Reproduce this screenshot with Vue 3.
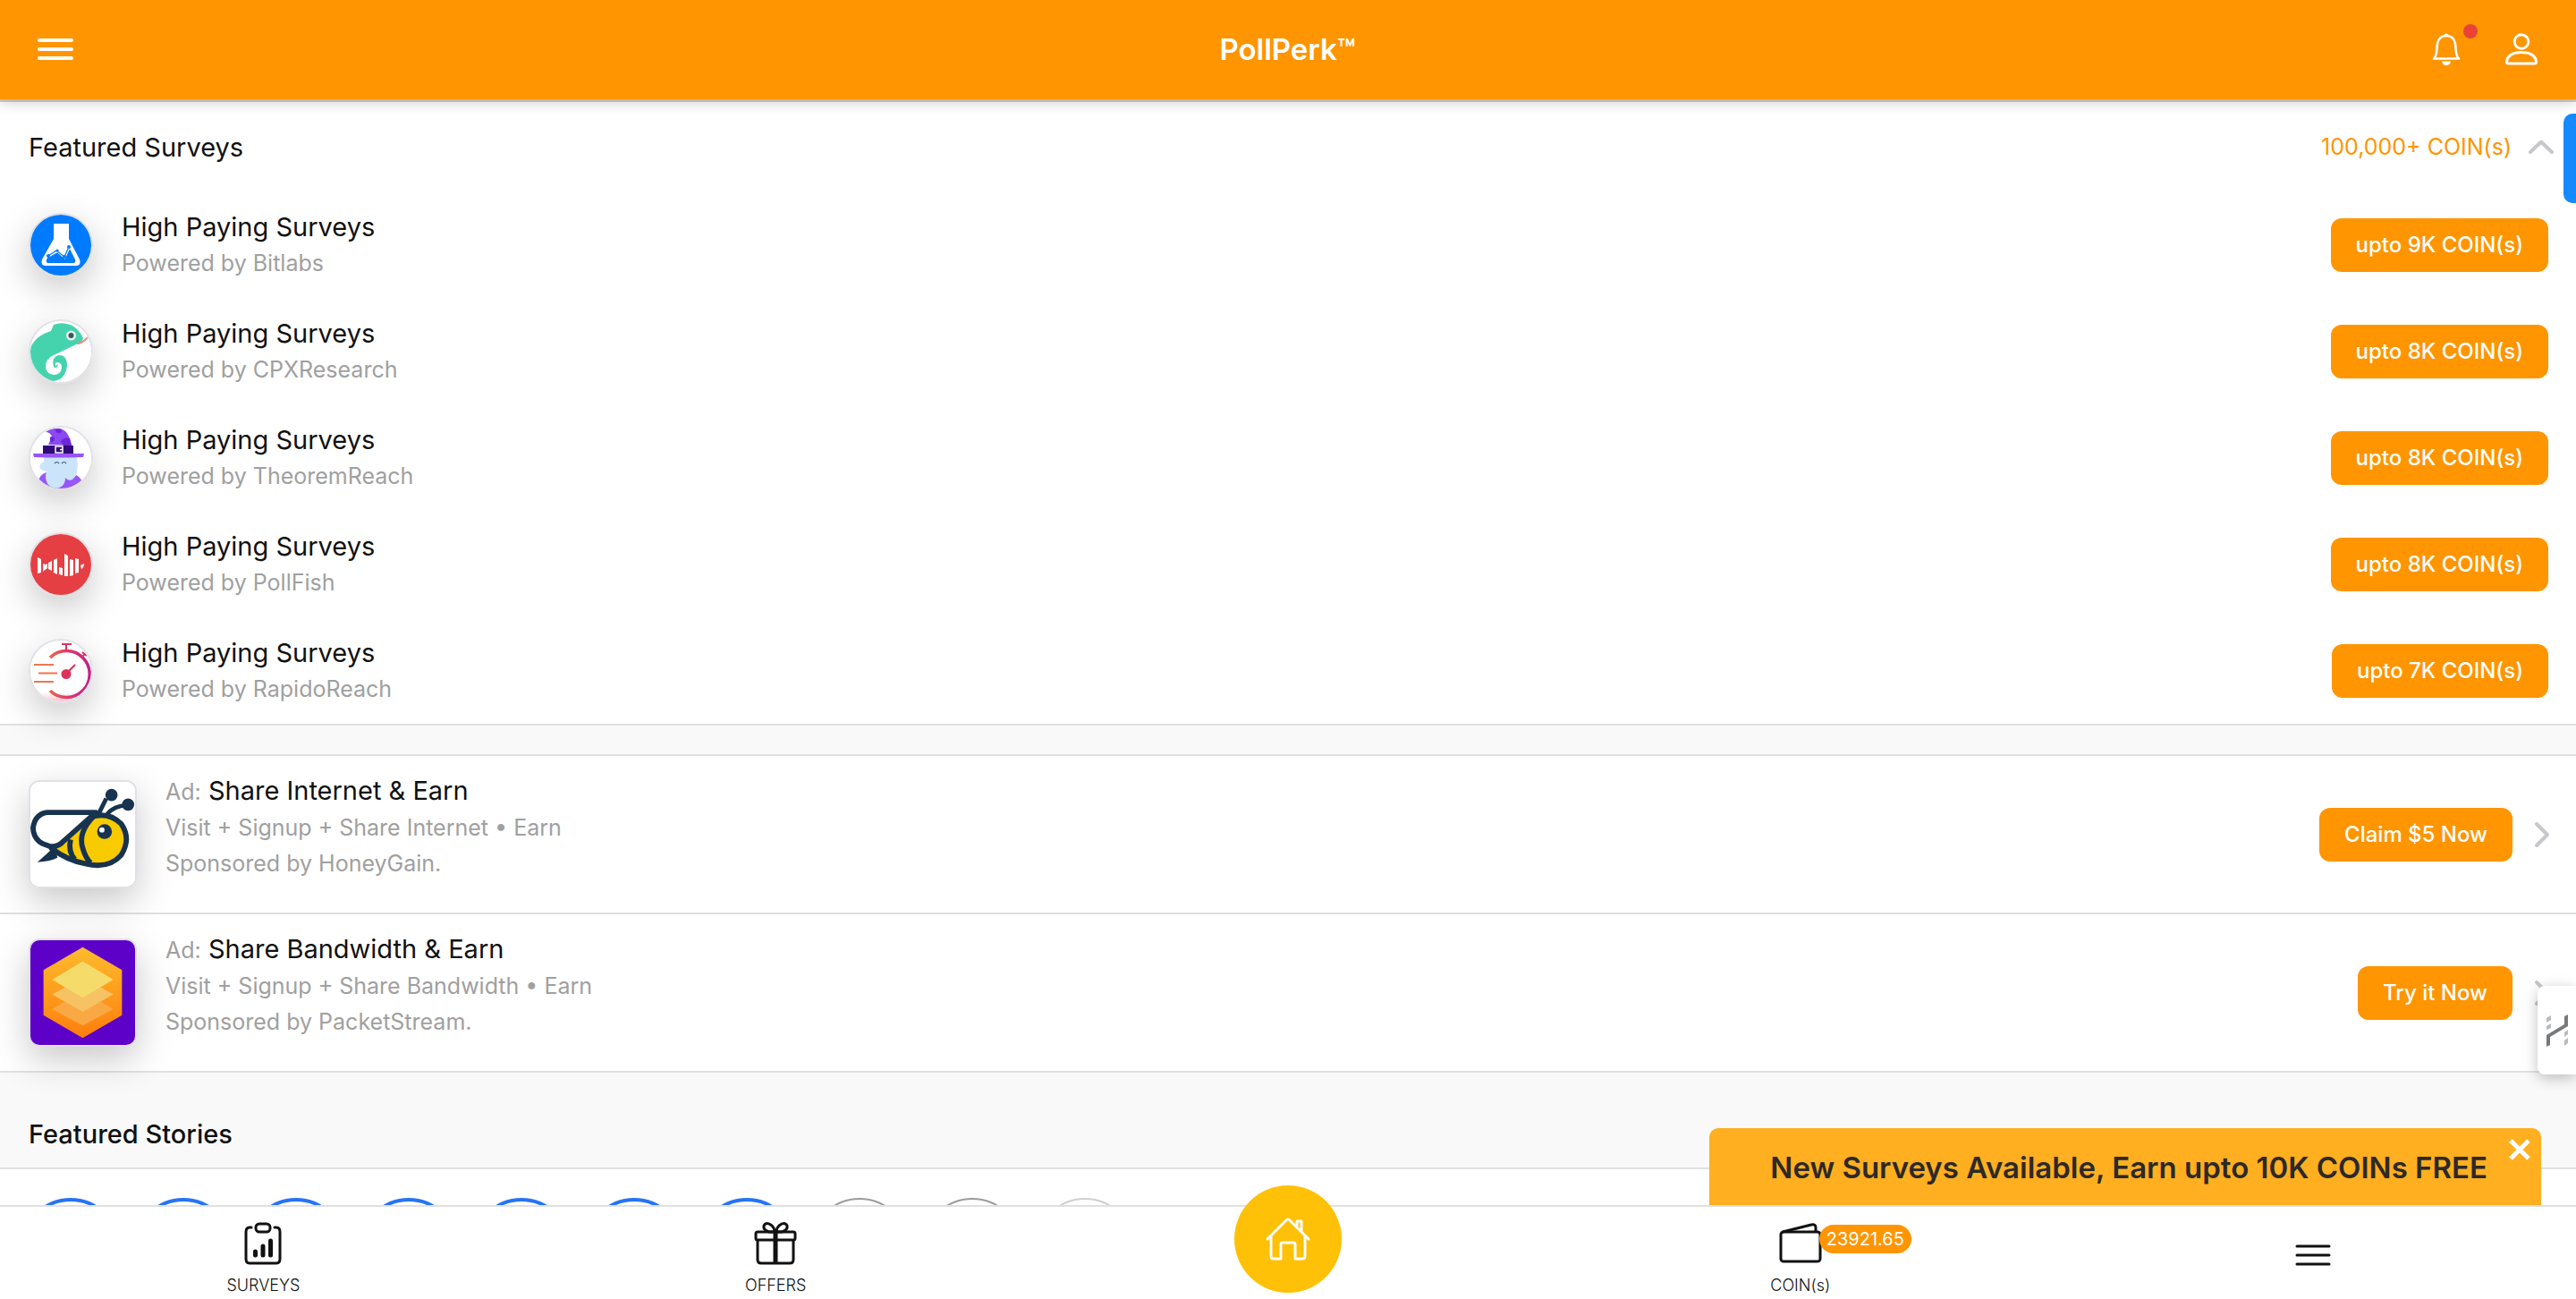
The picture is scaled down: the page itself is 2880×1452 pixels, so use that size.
<script setup>
const surveys = [
  { id: 'bitlabs', by: 'Bitlabs', reward: '9K' },
  { id: 'cpx', by: 'CPXResearch', reward: '8K' },
  { id: 'theorem', by: 'TheoremReach', reward: '8K' },
  { id: 'pollfish', by: 'PollFish', reward: '8K' },
  { id: 'rapido', by: 'RapidoReach', reward: '7K' },
]
const ads = [
  { id: 'honey', title: 'Share Internet & Earn', steps: 'Visit + Signup + Share Internet • Earn', by: 'HoneyGain', action: 'Claim $5 Now' },
  { id: 'packet', title: 'Share Bandwidth & Earn', steps: 'Visit + Signup + Share Bandwidth • Earn', by: 'PacketStream', action: 'Try it Now' },
]
const stories = ['new', 'new', 'new', 'new', 'new', 'new', 'new', 'seen', 'seen', 'old']
</script>

<template>
  <div class="app">
    <header class="navbar">
      <button class="icon-btn" aria-label="Menu">
        <svg width="40" height="24" viewBox="0 0 40 24" fill="none" stroke="#fff" stroke-width="4" stroke-linecap="round"><path d="M2 2H38M2 12H38M2 22H38" /></svg>
      </button>
      <h1>PollPerk™</h1>
      <div class="nav-actions">
        <button class="icon-btn bell" aria-label="Notifications">
          <svg width="32" height="36" viewBox="0 0 32 36"><path d="M2 28.500C6 26 5 18 6 12C7 6 11 3 16 3S25 6 26 12C27 18 26 26 30 28.500Z" fill="none" stroke="#fff" stroke-width="2.600" stroke-linejoin="round" /><path d="M13 2.500Q16-1.500 19 2.500ZM11 31.500H21Q20 36 16 36T11 31.500Z" fill="#fff" /></svg>
          <i class="dot"></i>
        </button>
        <button class="icon-btn" aria-label="Profile">
          <svg width="36" height="36" viewBox="0 0 36 36" fill="none" stroke="#fff" stroke-width="3"><circle cx="18" cy="9.500" r="7.800" /><path d="M1.500 32C2 25 9 21.500 18 21.500S34 25 34.500 32Q34.500 34 32.500 34H3.500Q1.500 34 1.500 32Z" /></svg>
        </button>
      </div>
    </header>

    <main class="content">
      <section class="block surveys">
        <button class="accordion">
          <span class="accordion-title">Featured Surveys</span>
          <span class="coins">100,000+ COIN(s)</span>
          <svg width="30" height="18" viewBox="0 0 30 18" fill="none" stroke="#c7c7cc" stroke-width="4" stroke-linecap="round" stroke-linejoin="round"><path d="M3 15L15 3.500L27 15" /></svg>
        </button>
        <ul>
          <li v-for="s in surveys" :key="s.id" class="survey">
            <span class="avatar">
              <svg v-if="s.id === 'bitlabs'" viewBox="0 0 68 68"><rect width="68" height="68" fill="#007bff" /><path d="M26 10H43V27L55 50Q57 57 51 57H17Q11 57 13 50L26 27Z" fill="#fff" /><path d="M18 50L20 47L30 42L38 48L44 38L50 50Q51 54 48 54H20Q17 54 18 50Z" fill="#007bff" /><path d="M20 46L30 40L38 47L43 36" fill="none" stroke="#fff" stroke-width="3.500" /><path d="M20 46L29 40L38 47L43 36" fill="none" stroke="#007bff" stroke-width="1.300" /><g fill="#007bff"><circle cx="20" cy="46" r="2" /><circle cx="30" cy="40" r="1.600" /><circle cx="38" cy="47" r="2" /><circle cx="43" cy="36" r="2" /></g></svg>
              <svg v-else-if="s.id === 'cpx'" viewBox="0 0 68 68"><rect width="68" height="68" fill="#fff" /><path d="M-2 38C0 24 8 16 23 11L26 4Q36 0 47 5Q55 10 59 19Q58 24 51 26L26 38Q17 42 17 50Q17 59 26 60Q34 60 35 52Q35 46 30 46Q27 46 28 50L31 48Q30 54 26 51Q23 40 32 38Q41 38 41 50Q39 66 25 67Q9 68 -2 50Z" fill="#45d3ae" /><path d="M52 25Q58 25 64 18" fill="none" stroke="#f08b82" stroke-width="2" /><circle cx="45.500" cy="16" r="5.500" fill="#e5f2f0" /><circle cx="45.500" cy="16" r="3" fill="#44545b" /></svg>
              <svg v-else-if="s.id === 'theorem'" viewBox="0 0 68 68"><rect width="68" height="68" fill="#fff" /><path d="M18 50Q9 53 9 61L18 68H51L58 60Q54 52 44 51Z" fill="#9855f8" /><path d="M15 31H51Q54 41 52 47Q53 53 47 58Q42 60 39 56Q39 67 28 68Q17 66 17 54L18 49Q8 47 11 41Q13 39 15 38Z" fill="#cbe4fa" /><path d="M20 19L24 10Q22 5 17 5Q24 0 33 1Q43 3 46 20Z" fill="#8b49f1" /><path d="M28 2Q36 0 35 5Q31 8 28 4ZM44 12Q36 10 34 16L37 20H46ZM23 10Q29 10 26 15Q21 18 22 11Z" fill="#6d27d5" /><rect x="14" y="20" width="34" height="9" fill="#310a78" /><path d="M3 29H60L59 33Q31 34 4 33Z" fill="#9855f8" /><path d="M28 21H36V28H28ZM36 24.500H33" fill="none" stroke="#fff" stroke-width="1.500" /><path d="M27 40Q29.500 37 32 40M35 40Q37.500 37 40 40" fill="none" stroke="#3f5270" stroke-width="1.200" /></svg>
              <svg v-else-if="s.id === 'pollfish'" viewBox="0 0 68 68"><rect width="68" height="68" fill="#e53f43" /><path d="M8 26L12 28V43L8 44ZM14 33L17 34L19 33V38L14 42ZM20 32L24 30V41L20 39ZM26 29L30 27V45L26 43ZM32 37L36 38V46L32 45ZM38 22L42 24V47H38ZM44 28L48 29V46L44 47ZM50 27L54 28V43L50 44ZM56 35L60 33Q60 37 57 39Z" fill="#fff" /></svg>
              <svg v-else viewBox="0 0 68 68"><defs><linearGradient id="rapido-ring" x1="0" x2="1"><stop stop-color="#ee604d" /><stop offset=".7" stop-color="#d3297c" /><stop offset="1" stop-color="#bf218b" /></linearGradient><linearGradient id="rapido-glow" x1="0" y1="0" x2="0" y2="1"><stop stop-color="#fff" /><stop offset="1" stop-color="#ffc4ce" /></linearGradient></defs><rect width="68" height="68" fill="#fff" /><rect x="8" y="58" width="44" height="10" fill="url(#rapido-glow)" /><path d="M22 19A26 26 0 1 1 22 56" fill="none" stroke="url(#rapido-ring)" stroke-width="3.500" /><path d="M40 12V5M35 4H46M40 37L50 27M57 19L61 15M58 13L63 17" fill="none" stroke="#d93364" stroke-width="2.200" /><circle cx="40" cy="37.500" r="5.500" fill="#dc3458" /><path d="M4 27H26M9 36.500H30M4 46H26" stroke="#f0744e" stroke-width="2.200" /></svg>
            </span>
            <div class="copy">
              <div class="title">High Paying Surveys</div>
              <div class="sub">Powered by {{ s.by }}</div>
            </div>
            <button class="btn">upto {{ s.reward }} COIN(s)</button>
          </li>
        </ul>
      </section>

      <section class="block ads">
        <article v-for="a in ads" :key="a.id" class="ad">
          <span class="thumb">
            <svg v-if="a.id === 'honey'" viewBox="0 0 120 120"><rect width="120" height="120" fill="#fff" /><path d="M28 74L8 92Q24 91 31 87Z" fill="#17334f" /><path d="M24 76Q32 60 70 40Q90 34 104 48Q116 65 104 84Q90 100 64 94Q42 90 24 76Z" fill="#f8ca00" stroke="#17334f" stroke-width="6" stroke-linejoin="round" /><path d="M19 35H75L39 67Q30 77 20 73Q4 69 3 53Q5 37 19 35Z" fill="#fff" stroke="#17334f" stroke-width="6" stroke-linejoin="round" /><path d="M46 66Q43 80 51 89M73 39Q54 58 60 76Q63 87 69 93" fill="none" stroke="#17334f" stroke-width="6" /><path d="M78 37L87 19M88 37Q96 27 110 27" fill="none" stroke="#17334f" stroke-width="5" /><g fill="#17334f"><circle cx="93" cy="15" r="7" /><circle cx="112" cy="26" r="7" /><circle cx="85" cy="57" r="8.500" /></g><circle cx="82" cy="55" r="3" fill="#fff" /></svg>
            <svg v-else viewBox="0 0 120 120"><defs><linearGradient id="packet-hex" x1="0" y1="0" x2="0" y2="1"><stop stop-color="#fdbb2d" /><stop offset="1" stop-color="#ff7e0c" /></linearGradient></defs><rect width="120" height="120" fill="#5d00c8" /><path d="M60 8L105 34V86L60 112L15 86V34Z" fill="url(#packet-hex)" /><path d="M60 58L95 79L60 98L25 79Z" fill="#f9a843" /><path d="M60 42L95 62L60 82L25 62Z" fill="#f7c263" /><path d="M60 24L95 45L60 66L25 45Z" fill="#f5dc6a" /></svg>
          </span>
          <div class="copy">
            <div class="title"><span class="tag">Ad:</span> {{ a.title }}</div>
            <div class="sub">{{ a.steps }}</div>
            <div class="sub">Sponsored by {{ a.by }}.</div>
          </div>
          <button class="btn">{{ a.action }}</button>
          <svg class="chevron" width="18" height="30" viewBox="0 0 18 30" fill="none" stroke="#c7c7cc" stroke-width="4" stroke-linecap="round" stroke-linejoin="round"><path d="M3 3L15 15L3 27" /></svg>
        </article>
      </section>

      <h2>Featured Stories</h2>
      <section class="stories">
        <a v-for="(s, i) in stories" :key="i" href="#" class="story" :class="s" aria-label="Story"></a>
      </section>

      <aside class="banner">
        <span>New Surveys Available, Earn upto 10K COINs FREE</span>
        <button class="close" aria-label="Close"><svg width="26" height="26" viewBox="0 0 26 26" stroke="#fff" stroke-width="5"><path d="M3 3L23 23M23 3L3 23" /></svg></button>
      </aside>
      <div class="side-tab"></div>
      <button class="widget" aria-label="Widget">
        <svg width="24" height="36" viewBox="0 0 24 36"><path d="M0 23L20 11V2L24 0V13L4 25V34L0 36Z" fill="#77787b" /><path d="M0 4L5 1V6L0 9ZM0 13L5 10V15L0 17ZM20 20L24 17V22L20 25ZM20 29L24 26V32L20 35Z" fill="#b9babc" /></svg>
      </button>
    </main>

    <nav class="tabbar">
      <a href="#" class="tab">
        <svg width="48" height="48" viewBox="0 0 48 48" fill="none" stroke="#111" stroke-width="3" stroke-linecap="round"><path d="M11 6H9Q5 6 5 11V41Q5 46 9 46H39Q43 46 43 41V11Q43 6 39 6H37" /><rect x="16" y="2" width="16" height="9" rx="4" /><path d="M15.500 33V37M24 27V37M32.500 21V37" stroke-width="5" /></svg>
        <span>SURVEYS</span>
      </a>
      <a href="#" class="tab">
        <svg width="48" height="48" viewBox="0 0 48 48" fill="none" stroke="#111" stroke-width="3"><rect x="2" y="11" width="44" height="9" rx="2" /><path d="M4 20V42Q4 46 8 46H40Q44 46 44 42V20M23 11H17Q10 9 11 4Q14-1 20 4Q23 7 23 11M25 11H31Q38 9 37 4Q34-1 28 4Q25 7 25 11" /><path d="M24 11V46" stroke-width="5" /></svg>
        <span>OFFERS</span>
      </a>
      <div class="tab">
        <button class="fab" aria-label="Home">
          <svg width="50" height="48" viewBox="0 0 50 48" fill="none" stroke="#fff" stroke-width="3" stroke-linecap="round" stroke-linejoin="round"><path d="M2 24L23 3Q25 1 27 3L48 24M6 21V43Q6 46 9 46H17V30Q17 28 19 28H31Q33 28 33 30V46H41Q44 46 44 43V21M35 10V4H40V15" /></svg>
        </button>
      </div>
      <a href="#" class="tab">
        <span class="wallet">
          <svg width="48" height="48" viewBox="0 0 48 48" fill="none" stroke="#111" stroke-width="3"><rect x="2" y="11" width="44" height="33" rx="3" /><path d="M4 11L36 3Q41 2 41 6V11" /></svg>
          <b class="badge">23921.65</b>
        </span>
        <span>COIN(s)</span>
      </a>
      <button class="tab" aria-label="More">
        <svg width="40" height="24" viewBox="0 0 40 24" fill="none" stroke="#111" stroke-width="3" stroke-linecap="round"><path d="M2 2H38M2 12H38M2 22H38" /></svg>
      </button>
    </nav>
  </div>
</template>

<style>
body { margin: 0; }
</style>

<style scoped>
* { box-sizing: border-box; }
.app { display: flex; flex-direction: column; height: 100vh; overflow: hidden; background: #f9f9f9; color: #111; font-family: Inter, "Liberation Sans", sans-serif; font-weight: 400; }
button { padding: 0; border: 0; background: none; color: inherit; font: inherit; cursor: pointer; }
a { color: inherit; text-decoration: none; }
svg { display: block; flex: none; }
h1, h2, ul { margin: 0; padding: 0; }
ul { list-style: none; }

.navbar { position: relative; z-index: 2; flex: none; display: grid; grid-template-columns: 1fr auto 1fr; align-items: center; height: 111px; padding: 0 43px 2px 42px; background: #ff9500; color: #fff; box-shadow: 0 3px 0 rgba(120, 110, 100, .35), 0 4px 14px rgba(0, 0, 0, .18); }
h1 { font-size: 33px; line-height: 40px; font-weight: 600; }
.icon-btn { position: relative; justify-self: start; }
.nav-actions { display: flex; gap: 50px; justify-self: end; }
.dot { position: absolute; top: -10px; right: -19px; width: 16px; height: 16px; border-radius: 50%; background: #ea4335; }

.content { position: relative; flex: 1; min-height: 0; padding-top: 3px; }
.block { background: #fff; border-bottom: 2px solid #e0e0e0; }
.surveys { margin-top: -3px; padding-top: 3px; }
.accordion { display: flex; align-items: center; gap: 18px; width: 100%; height: 100px; padding: 0 24px 0 32px; text-align: left; }
.accordion-title { flex: 1; font-size: 29px; }
.coins { color: #ff9500; font-size: 25px; }
.survey { display: flex; align-items: center; gap: 32px; height: 119px; padding: 0 31px 0 32px; }
.avatar, .thumb { flex: none; overflow: hidden; border: 2px solid #e0e0e6; box-shadow: 0 14px 40px rgba(0, 0, 0, .22); }
.avatar { width: 72px; height: 72px; border-radius: 50%; }
.thumb { width: 121px; height: 121px; border-radius: 12px; }
.copy { flex: 1; }
.title { font-size: 29px; line-height: 40px; }
.sub, .tag { color: #a0a0a0; font-size: 25px; line-height: 40px; }
.btn { height: 60px; padding: 0 28px; border-radius: 12px; background: #ff9500; color: #fff; font-size: 24px; font-weight: 500; }

.ads { margin-top: 32px; border-top: 2px solid #e0e0e0; }
.ad { display: flex; align-items: center; gap: 32px; height: 175px; padding: 0 29px 0 32px; }
.ad + .ad { border-top: 2px solid #e0e0e0; height: 177px; }
.ad .copy { align-self: flex-start; padding-top: 19px; }
.chevron { margin-left: -8px; }

h2 { height: 106px; padding: 49px 32px 0; font-size: 29px; line-height: 40px; font-weight: 500; }
.stories { display: flex; gap: 16px; height: 240px; padding: 32px 24px; border-top: 2px solid #e0e0e0; background: #fff; }
.story { width: 110px; height: 110px; border-radius: 50%; border: 4px solid #2574f5; }
.story.seen { border: 2px solid #9c9c9c; }
.story.old { border: 2px solid #cfcfcf; }

.banner { position: absolute; right: 39px; bottom: 0; display: flex; align-items: center; height: 86px; padding: 2px 60px 0 68px; border-radius: 10px 10px 0 0; background: #ffaf20; color: #2d2926; font-size: 33px; font-weight: 600; }
.close { position: absolute; top: 11px; right: 11px; }
.side-tab { position: absolute; top: 16px; right: 0; width: 14px; height: 100px; border-radius: 10px 0 0 10px; background: #158aff; }
.widget { position: absolute; right: 0; bottom: 146px; width: 43px; height: 99px; padding-left: 10px; border-radius: 8px 0 0 8px; background: #fff; box-shadow: 0 4px 16px rgba(0, 0, 0, .25); }

.tabbar { position: relative; z-index: 1; flex: none; display: flex; height: 105px; padding: 0 8px; border-top: 2px solid #e0e0e0; background: #fff; }
.tab { flex: 1; display: flex; flex-direction: column; align-items: center; padding-top: 17px; font-size: 18px; line-height: 24px; font-weight: 300; gap: 11px; }
button.tab { padding-top: 42px; }
.wallet { position: relative; }
.badge { position: absolute; left: 45px; top: 3px; padding: 0 8px; border-radius: 16px; background: #ff9500; color: #fff; font-size: 20px; line-height: 32px; font-weight: 400; }
.fab { display: grid; place-items: center; flex: none; width: 120px; height: 120px; margin-top: -41px; border-radius: 50%; background: #ffc107; }
</style>
